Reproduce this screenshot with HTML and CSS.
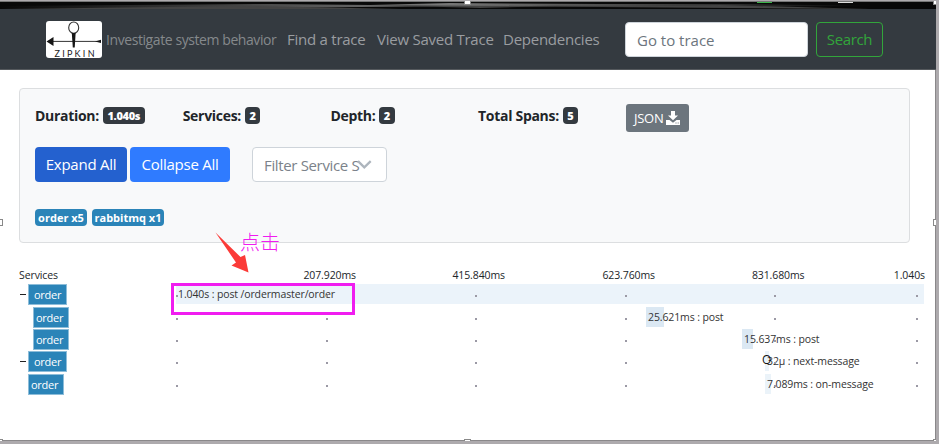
FILE: index.html
```html
<!DOCTYPE html>
<html lang="en">
<head>
<meta charset="utf-8">
<title>Zipkin</title>
<link rel="stylesheet" href="styles.css">
</head>
<body>
<div class="frame">
  <div class="strip">
    <svg width="936" height="8" viewBox="0 0 936 8" preserveAspectRatio="none">
      <defs><linearGradient id="g"><stop offset="0" stop-color="#777" stop-opacity="0"/><stop offset=".5" stop-color="#777"/><stop offset="1" stop-color="#777" stop-opacity="0"/></linearGradient></defs>
      <rect width="936" height="8" fill="#080808"/>
      <path d="M0 4L270 2L370 3L450 1L600 2L740 2L880 4L640 5L450 4L270 6L0 6Z" fill="url(#g)"/>
      <path d="M0 7L250 4L400 7ZM370 3L530 4L595 3L480 6ZM600 5L720 3L870 7Z" fill="#444"/>
      <path d="M757 0h15v1h-15z" fill="#3bb54a"/><path d="M838 0h15v1h-15z" fill="#ddd"/>
    </svg>
  </div>
  <header class="navbar">
    <svg class="logo" width="56" height="37" viewBox="0 0 56 37">
      <rect width="56" height="37" rx="3" fill="#fff"/>
      <path d="M5 20.4H55" stroke="#333" stroke-width="1"/>
      <path d="M0.5 20.4L7.5 16V25ZM49 20.4L55 18.8V22Z" fill="#151515"/>
      <ellipse cx="27.7" cy="6.7" rx="5" ry="5.7" fill="#fff" stroke="#333" stroke-width="1.1"/>
      <path d="M25.8 12L29.6 12L28.7 26.5H26.8Z" fill="#151515"/>
      <text x="8.5" y="36.4" class="logo-text" textLength="40">ZIPKIN</text>
    </svg>
    <span class="tagline">Investigate system behavior</span>
    <nav>
      <a class="find">Find a trace</a><a class="saved">View Saved Trace</a><a class="deps">Dependencies</a>
    </nav>
    <div class="goto">Go to trace</div>
    <div class="search">Search</div>
  </header>
  <main>
    <section class="card">
      <div class="stats">
        <div class="stat">Duration: <b>1.040s</b></div>
        <div class="stat">Services: <b>2</b></div>
        <div class="stat">Depth: <b>2</b></div>
        <div class="stat">Total Spans: <b>5</b></div>
        <div class="json"><span>JSON</span><svg width="14" height="14" viewBox="0 0 14 14"><path d="M5 0h4v4.5h3L7 9.3 2 4.5h3zM0 9h3.5L7 11.8 10.5 9H14v5H0z" fill="#fff"/><path d="M9.5 12h1M11.7 12h1" stroke="#6c757d"/></svg></div>
      </div>
      <div class="controls">
        <div class="btn expand">Expand All</div>
        <div class="btn collapse">Collapse All</div>
        <div class="filter"><span>Filter Service S</span><svg width="15" height="9" viewBox="0 0 15 9"><path d="M1 1.2L7.3 7.3L13.7 1.2" fill="none" stroke="#adb5bd" stroke-width="2.3"/></svg></div>
      </div>
      <div class="tags"><span class="t1">order x5</span><span class="t2">rabbitmq x1</span></div>
    </section>
    <section class="trace">
      <div class="head"><span>Services</span><span>207.920ms</span><span>415.840ms</span><span>623.760ms</span><span>831.680ms</span><span>1.040s</span></div>
      <div class="row root">
        <div class="svc"><i class="minus"></i><span class="name wide">order</span></div>
        <div class="line"><i></i><i></i><i></i><i></i><i></i><i></i><div class="span" style="left:0;width:748px"><em>1.040s : post /ordermaster/order</em></div></div>
      </div>
      <div class="row">
        <div class="svc"><span class="name child">order</span></div>
        <div class="line"><i></i><i></i><i></i><i></i><i></i><i></i><div class="span" style="left:470px;width:18px"><em>25.621ms : post</em></div></div>
      </div>
      <div class="row">
        <div class="svc"><span class="name child">order</span></div>
        <div class="line"><i></i><i></i><i></i><i></i><i></i><i></i><div class="span" style="left:566px;width:11px"><em>15.637ms : post</em></div></div>
      </div>
      <div class="row">
        <div class="svc"><i class="minus"></i><span class="name wide">order</span></div>
        <div class="line"><i></i><i></i><i></i><i></i><i></i><i></i><div class="span pale" style="left:589px;width:4px"><em>32μ : next-message</em><b class="mark">O</b></div></div>
      </div>
      <div class="row last">
        <div class="svc"><span class="name leaf">order</span></div>
        <div class="line"><i></i><i></i><i></i><i></i><i></i><i></i><div class="span pale" style="left:589px;width:6px"><em>7.089ms : on-message</em></div></div>
      </div>
    </section>
  </main>
  <div class="callout-box"></div>
  <div class="callout-text">点击</div>
  <svg class="arrow" width="36" height="42" viewBox="0 0 36 42"><path d="M0.5 0.5L25.5 25L30 23L33.5 40.5L16.5 33.5L21 30.5Z" fill="#fb3b38"/></svg>
  <i class="handle" style="left:464px;top:-3px"></i><i class="handle" style="left:933px;top:-3px"></i>
  <i class="handle" style="left:-4px;top:218px"></i><i class="handle" style="left:933px;top:218px"></i>
  <i class="handle" style="left:-4px;top:438px"></i><i class="handle" style="left:464px;top:438px"></i><i class="handle" style="left:933px;top:438px"></i>
</div>
</body>
</html>
```
FILE: styles.css
```css
* { box-sizing: border-box; }
body { margin: 0; background: #fff; font-family: "Open Sans", "Noto Sans", sans-serif; color: #212529; }
.frame { position: relative; width: 939px; height: 444px; overflow: hidden; border: solid #adaaad; border-width: 1px 3px 3px 0; box-shadow: inset -1px -1px #8a888a; white-space: nowrap; }
.strip { height: 8px; border-top: 1px solid #777; overflow: hidden; }
.strip svg { display: block; }
.navbar { height: 61px; background: #343a40; border-bottom: 1px solid #55595d; display: flex; align-items: center; padding-left: 46px; font-size: 15px; color: #9a9da0; }
.logo { flex: none; margin-top: 1px; }
.logo-text { font: 9px Lato, sans-serif; fill: #222; }
.tagline { width: 181px; padding-left: 4px; font-size: 14px; letter-spacing: -.42px; color: #85898c; }
nav { display: flex; width: 342px; padding-left: 4px; letter-spacing: -.25px; }
.find { width: 90px; } .saved { width: 126px; }
.goto { width: 183px; height: 35px; background: #fff; border: 1px solid #ced4da; border-radius: 4px; padding: 1px 11px; line-height: 33px; color: #6c757d; }
.search { width: 67px; height: 35px; margin-left: 8px; border: 1px solid #32a53b; border-radius: 4px; color: #32a53b; text-align: center; line-height: 33px; letter-spacing: -.35px; }
main { padding: 18px 0 0 19px; }
.card { width: 891px; height: 155px; border: 1px solid #dcdee0; border-radius: 4px; background: #f8f9fa; padding: 15px; }
.stats { display: flex; height: 28px; font-size: 14px; font-weight: 700; }
.stat { width: 147.7px; display: flex; align-items: center; gap: 4px; height: 23px; letter-spacing: -.3px; }
.stat b { background: #343a40; color: #fff; border-radius: 4px; font-size: 11px; height: 17px; line-height: 17px; padding: 0 4.5px; letter-spacing: -.3px; }
.json { width: 63px; height: 28px; background: #6c757d; color: #fff; border-radius: 3px; font-weight: 400; font-size: 13px; display: flex; align-items: center; justify-content: center; gap: 3px; letter-spacing: -.3px; }
.controls { display: flex; margin-top: 15px; height: 35px; font-size: 15px; }
.btn { color: #fff; border-radius: 4px; text-align: center; line-height: 35px; letter-spacing: -.25px; }
.expand { width: 92px; background: #2461cf; margin-right: 3px; }
.collapse { width: 100px; background: #2f7bff; margin-right: 22px; }
.filter { width: 135px; border: 1px solid #ced4da; border-radius: 4px; background: #fff; color: #7b828a; padding-left: 11px; display: flex; align-items: center; letter-spacing: -.35px; }
.filter span { width: 93px; }
.tags { display: flex; gap: 5px; margin-top: 27px; font-size: 11px; font-weight: 700; color: #fff; }
.tags span { height: 17px; line-height: 17px; text-align: center; background: #2b84b8; border-radius: 4px; }
.t1 { width: 52px; } .t2 { width: 72px; }
.trace { margin-top: 23px; font-size: 10.5px; }
.head { display: grid; grid-template-columns: 187px 150px 149px 150px 149.5px 120.5px; height: 18px; line-height: 18px; text-align: right; }
.head span:first-child { text-align: left; }
.head span { letter-spacing: -.1px; }
.row { display: flex; height: 22px; }
.row.root { height: 23px; }
.row.last { margin-top: 1px; }
.svc { display: flex; width: 157px; }
.minus { width: 6px; height: 1px; background: #222; margin: 10px 3px 0 1px; }
.name { height: 21px; line-height: 21px; background: #2b84b8; color: #fff; font-size: 11px; letter-spacing: -.25px; outline: 1px solid #8dbdd9; outline-offset: -1px; }
.wide { width: 39px; padding-left: 6px; margin-left: -1px; }
.child { width: 36px; padding-left: 3px; margin-left: 14px; }
.leaf { width: 36px; padding-left: 3px; margin-left: 9px; }
.line { position: relative; width: 748px; height: 20px; display: grid; grid-template-columns: 149.6px 149.6px 149.6px 149.6px 142px 7px; align-items: center; }
.line > i { width: 2px; height: 2px; background: #9b99a5; z-index: 2; margin-top: 3px; }
.span { position: absolute; top: 0; height: 20px; line-height: 21px; background: #dbe8f3; }
.root .span { background: #ebf3fa; }
.span.pale { background: #ebf3f9; }
.span em { font-style: normal; padding-left: 2px; letter-spacing: -.12px; color: #333; }
.mark { position: absolute; left: -3px; top: -2px; font-size: 12px; font-weight: 400; color: #111; }
.callout-box { position: absolute; left: 171px; top: 282px; width: 184px; height: 32px; border: 3px solid #f01cf0; z-index: 3; }
.callout-text { position: absolute; left: 240px; top: 226px; font: 300 20px/30px "Noto Sans CJK SC", sans-serif; color: #f01cf0; }
.arrow { position: absolute; left: 215px; top: 231px; }
.handle { position: absolute; width: 7px; height: 7px; background: #fff; border: 1px solid #888; }
```
